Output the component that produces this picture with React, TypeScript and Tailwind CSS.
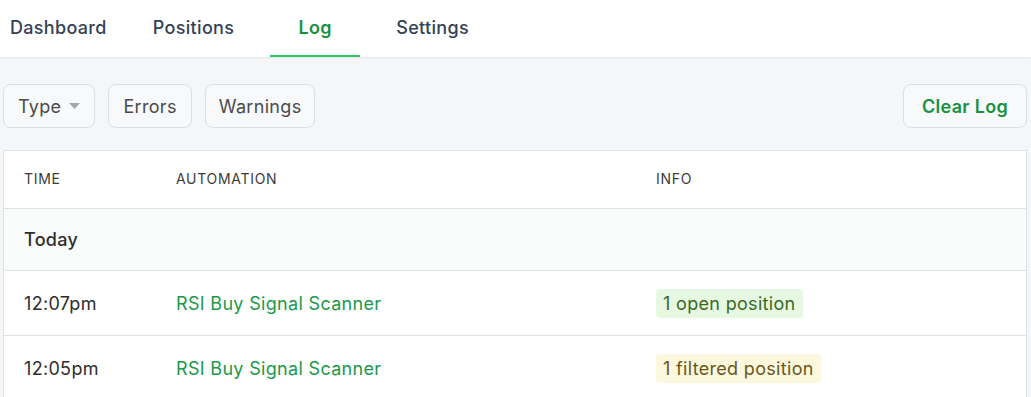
import { useState } from "react";

const tabs = ["Dashboard", "Positions", "Log", "Settings"];

const rows = [
  { time: "12:07pm", automation: "RSI Buy Signal Scanner", info: "1 open position", kind: "open" },
  { time: "12:05pm", automation: "RSI Buy Signal Scanner", info: "1 filtered position", kind: "filtered" },
];

export default function App() {
  const [active, setActive] = useState("Log");

  return (
    <div
      className="h-[397px] overflow-hidden bg-[#f5f6f8] tracking-[0.02em]"
      style={{ fontFamily: 'Inter, "Noto Sans", "Liberation Sans", sans-serif' }}
    >
      <nav className="flex h-[57px] gap-[26px] bg-white shadow-[0_1px_2px_rgba(0,0,0,0.07)]">
        {tabs.map((tab) => (
          <button
            key={tab}
            onClick={() => setActive(tab)}
            className={
              tab === active
                ? "flex min-w-[90px] items-center justify-center border-b-2 border-[#2fc665] px-2.5 pb-[1px] text-[18px] font-semibold text-[#17913f]"
                : "flex min-w-[90px] items-center justify-center border-b-2 border-transparent px-2.5 pb-[1px] text-[18px] font-medium text-[#344256]"
            }
          >
            {tab}
          </button>
        ))}
      </nav>

      <div className="pl-[3px] pr-1 pt-[27px]">
        <div className="flex items-center justify-between">
          <div className="flex gap-[13px]">
            <button className="flex h-[44px] items-center gap-2 rounded-lg border border-[#dcdee3] bg-[#f8f9fa] px-[14px] text-[18px] text-[#4a4a4a]">
              Type
              <svg width="11" height="6" viewBox="0 0 11 6">
                <path d="M0 0h11L5.5 6z" fill="#a3a6ab" />
              </svg>
            </button>
            <button className="h-[44px] rounded-lg border border-[#dcdee3] bg-[#f8f9fa] px-[14px] text-[18px] text-[#4a4a4a]">
              Errors
            </button>
            <button className="h-[44px] rounded-lg border border-[#dcdee3] bg-[#f8f9fa] px-[13px] text-[18px] text-[#4a4a4a]">
              Warnings
            </button>
          </div>
          <button className="h-[44px] rounded-lg border border-[#dcdee3] bg-[#f8f9fa] px-[18px] text-[18px] font-semibold text-[#17913f]">
            Clear Log
          </button>
        </div>

        <div className="mt-[22px] border border-[#dfe1e6] bg-white">
          <div className="grid h-[57px] grid-cols-[152px_480px_1fr] items-center pb-[2px] pl-5 text-[14px] uppercase tracking-[0.05em] text-[#3b3b3b]">
            <div>Time</div>
            <div>Automation</div>
            <div>Info</div>
          </div>
          <div className="flex h-[62px] items-center border-t border-[#dfe1e6] bg-[#fafbfb] pl-5 text-[18px] font-medium text-[#2e2e2e]">
            Today
          </div>
          {rows.map((row, i) => (
            <div
              key={i}
              className="grid h-[65px] grid-cols-[152px_480px_1fr] items-center border-t border-[#dfe1e6] pl-5 text-[18px]"
            >
              <div className="text-[#2e2e2e]">{row.time}</div>
              <div className="text-[#1a9a49]">{row.automation}</div>
              <div>
                <span
                  className={
                    row.kind === "open"
                      ? "inline-block rounded-[4px] bg-[#e6f8e2] px-[7px] py-[1px] text-[#3b6a25]"
                      : "inline-block rounded-[4px] bg-[#fbf8dd] px-[7px] py-[1px] text-[#6a561c]"
                  }
                >
                  {row.info}
                </span>
              </div>
            </div>
          ))}
        </div>
      </div>
    </div>
  );
}
